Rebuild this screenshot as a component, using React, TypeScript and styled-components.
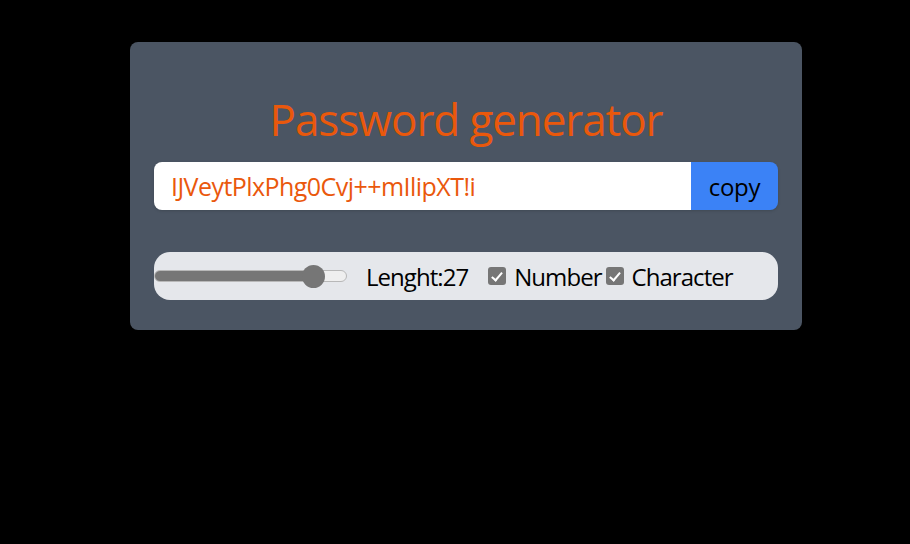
import React, { useState } from "react";
import styled, { createGlobalStyle } from "styled-components";

const GlobalStyle = createGlobalStyle`
  html, body {
    margin: 0;
    padding: 0;
    background: #000000;
    font-family: "Open Sans", "Noto Sans", sans-serif;
  }
`;

const Page = styled.div`
  display: flex;
  justify-content: center;
  padding: 42px 0 0 22px;
`;

const Card = styled.div`
  width: 672px;
  box-sizing: border-box;
  background: #4b5563;
  border-radius: 8px;
  padding: 49px 24px 30px;
  display: flex;
  flex-direction: column;
`;

const Title = styled.h1`
  margin: 0 0 15px;
  font-size: 44px;
  line-height: 56px;
  letter-spacing: -1.1px;
  font-weight: 400;
  text-align: center;
  color: #ea580c;
`;

const InputRow = styled.div`
  display: flex;
  height: 48px;
  border-radius: 8px;
  overflow: hidden;
  box-shadow: 0 1px 3px rgba(0, 0, 0, 0.15);
  margin-bottom: 42px;
`;

const PasswordField = styled.input`
  flex: 1;
  min-width: 0;
  border: none;
  outline: none;
  background: #ffffff;
  padding: 0 16px 0 17px;
  font-family: inherit;
  font-size: 25px;
  letter-spacing: -0.55px;
  color: #ea580c;
`;

const CopyButton = styled.button`
  width: 87px;
  border: none;
  background: #3b82f6;
  color: #000000;
  font-family: inherit;
  font-size: 24px;
  letter-spacing: -0.3px;
  padding: 0;
  cursor: pointer;
`;

const OptionsRow = styled.div`
  display: flex;
  align-items: center;
  height: 48px;
  background: #e5e7eb;
  border-radius: 16px;
  font-size: 24px;
  letter-spacing: -0.95px;
  color: #000000;
`;

const Range = styled.input`
  -webkit-appearance: none;
  appearance: none;
  width: 193px;
  height: 12px;
  margin: 0 19px 0 0;
  border-radius: 6px;
  box-sizing: border-box;
  border: 1px solid #b8b8b8;
  outline: none;
  &::-webkit-slider-thumb {
    -webkit-appearance: none;
    appearance: none;
    width: 23px;
    height: 23px;
    border-radius: 50%;
    background: #767676;
    border: none;
  }
`;

const LengthLabel = styled.label`
  margin-right: 20px;
  white-space: nowrap;
`;

const CheckGroup = styled.label`
  display: flex;
  align-items: center;
  gap: 8px;
  margin-right: 4px;
  white-space: nowrap;
`;

const Check = styled.input`
  -webkit-appearance: none;
  appearance: none;
  width: 18px;
  height: 18px;
  margin: 0;
  border-radius: 3px;
  background: #767676;
  position: relative;
  flex-shrink: 0;
  &::after {
    content: "";
    position: absolute;
    left: 6px;
    top: 2.5px;
    width: 4px;
    height: 9px;
    border: solid #ffffff;
    border-width: 0 2.5px 2.5px 0;
    transform: rotate(40deg);
  }
`;

export default function App() {
  const [length, setLength] = useState(27);
  const min = 6;
  const max = 30;
  const pct = ((length - min) / (max - min)) * 100;
  const travel = `calc(11.5px + (100% - 23px) * ${pct / 100})`;
  return (
    <>
      <GlobalStyle />
      <Page>
        <Card>
          <Title>Password generator</Title>
          <InputRow>
            <PasswordField readOnly value="IJVeytPlxPhg0Cvj++mIlipXT!i" />
            <CopyButton>copy</CopyButton>
          </InputRow>
          <OptionsRow>
            <Range
              type="range"
              min={min}
              max={max}
              value={length}
              onChange={(e) => setLength(Number(e.target.value))}
              style={{
                background: `linear-gradient(to right, #767676 0, #767676 ${travel}, #efefef ${travel}, #efefef 100%)`,
              }}
            />
            <LengthLabel>Lenght:{length}</LengthLabel>
            <CheckGroup>
              <Check type="checkbox" defaultChecked />
              Number
            </CheckGroup>
            <CheckGroup>
              <Check type="checkbox" defaultChecked />
              Character
            </CheckGroup>
          </OptionsRow>
        </Card>
      </Page>
    </>
  );
}
